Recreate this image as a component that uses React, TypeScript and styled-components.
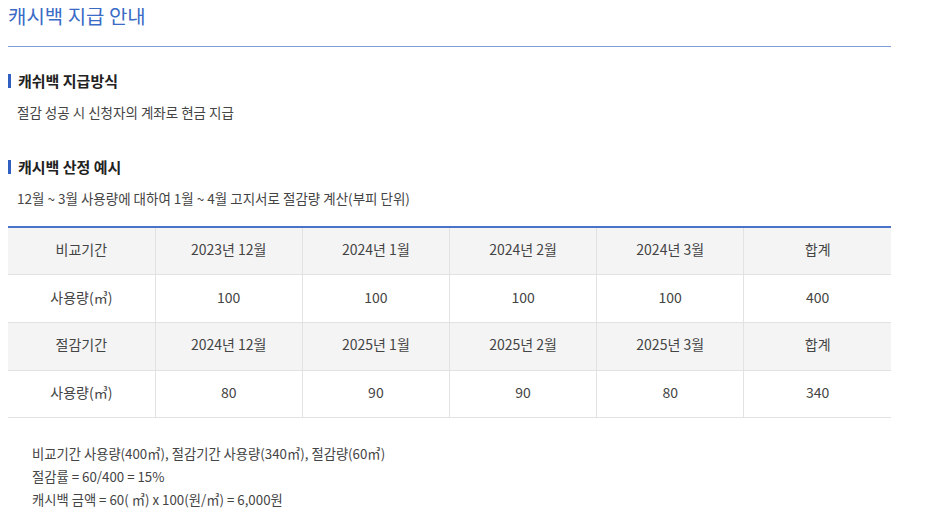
import { FC } from "react";
import styled, { createGlobalStyle } from "styled-components";

const GlobalStyle = createGlobalStyle`
  body {
    margin: 8px;
    background: #fff;
    font-family: "Noto Sans CJK KR", "Noto Sans", sans-serif;
    color: #333;
  }
`;

const Page = styled.div`
  width: 883px;
`;

const PageTitle = styled.h2`
  margin: -6px 0 0;
  padding: 0 0 16px;
  font-size: 20px;
  font-weight: 400;
  line-height: 28px;
  color: #3a6bc6;
  border-bottom: 1px solid #7e9ed8;
`;

const SectionTitle = styled.h3<{ $gap?: number }>`
  display: flex;
  align-items: center;
  gap: 7px;
  margin: ${(p) => p.$gap ?? 23}px 0 0;
  font-size: 15px;
  font-weight: 700;
  line-height: 22px;
  color: #222;

  &::before {
    content: "";
    width: 3px;
    height: 14px;
    background: #2f5fc0;
  }
`;

const Desc = styled.p`
  margin: 10px 0 0 9px;
  font-size: 13.5px;
  line-height: 20px;
  color: #444;
`;

const Table = styled.table`
  width: 100%;
  margin-top: 18px;
  border-collapse: collapse;
  table-layout: fixed;
  border-top: 2px solid #4a72c8;
  font-size: 14px;
  color: #444;
`;

const Cell = styled.td<{ $shaded?: boolean }>`
  height: 47.7px;
  padding: 0 0 4px;
  box-sizing: border-box;
  text-align: center;
  background: ${(p) => (p.$shaded ? "#f4f4f4" : "#fff")};
  border-bottom: 1px solid #e2e2e2;
  border-left: 1px solid #e2e2e2;

  &:first-child {
    border-left: none;
  }
`;

const Notes = styled.div`
  margin: 24px 0 0 24px;
  font-size: 13.3px;
  line-height: 23px;
  color: #444;
`;

const rows: { shaded: boolean; cells: string[] }[] = [
  { shaded: true, cells: ["비교기간", "2023년 12월", "2024년 1월", "2024년 2월", "2024년 3월", "합계"] },
  { shaded: false, cells: ["사용량(㎥)", "100", "100", "100", "100", "400"] },
  { shaded: true, cells: ["절감기간", "2024년 12월", "2025년 1월", "2025년 2월", "2025년 3월", "합계"] },
  { shaded: false, cells: ["사용량(㎥)", "80", "90", "90", "80", "340"] },
];

const App: FC = () => {
  return (
    <Page>
      <GlobalStyle />
      <PageTitle>캐시백 지급 안내</PageTitle>

      <SectionTitle>캐쉬백 지급방식</SectionTitle>
      <Desc>절감 성공 시 신청자의 계좌로 현금 지급</Desc>

      <SectionTitle $gap={34}>캐시백 산정 예시</SectionTitle>
      <Desc>12월 ~ 3월 사용량에 대하여 1월 ~ 4월 고지서로 절감량 계산(부피 단위)</Desc>

      <Table>
        <tbody>
          {rows.map((row, i) => (
            <tr key={i}>
              {row.cells.map((c, j) => (
                <Cell key={j} $shaded={row.shaded}>
                  {c}
                </Cell>
              ))}
            </tr>
          ))}
        </tbody>
      </Table>

      <Notes>
        <div>비교기간 사용량(400㎥), 절감기간 사용량(340㎥), 절감량(60㎥)</div>
        <div>절감률 = 60/400 = 15%</div>
        <div>캐시백 금액 = 60( ㎥) x 100(원/㎥) = 6,000원</div>
      </Notes>
    </Page>
  );
};

export default App;
